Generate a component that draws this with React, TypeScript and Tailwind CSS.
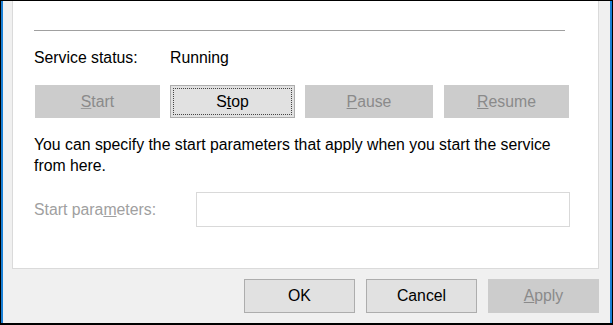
import React from "react";

const font = { fontFamily: '"Liberation Sans", Arial, sans-serif' };

function Btn({
  children,
  disabled,
  focused,
  className = "",
}: {
  children: React.ReactNode;
  disabled?: boolean;
  focused?: boolean;
  className?: string;
}) {
  return (
    <div
      className={
        "flex shrink-0 items-center justify-center text-[15.8px] leading-none border " +
        (disabled
          ? "bg-[#cccccc] border-[#cccccc] text-[#8a8a8a] "
          : "bg-[#e1e1e1] border-[#adadad] text-[#000000] ") +
        className
      }
    >
      {focused ? (
        <div className="m-[2px] flex h-[calc(100%-4px)] w-[calc(100%-4px)] items-center justify-center border border-dotted border-[#444]">
          {children}
        </div>
      ) : (
        children
      )}
    </div>
  );
}

export default function App() {
  return (
    <div
      className="w-[613px] h-[325px] bg-black pt-px pl-px pr-px pb-[2px]"
      style={font}
    >
      <div className="flex h-full w-full flex-col border-l-2 border-r-2 border-[#1a7fd4] bg-[#f0f0f0]">
        <div className="ml-[9px] mr-[11px] h-[268px] shrink-0 border-l border-r border-b border-[#dadada] bg-white">
          <div className="pl-[21px] pt-[29px]">
            <div className="h-px w-[531px] bg-[#a0a0a0]" />
            <div className="mt-[18px] flex h-[18px] items-center text-[15.8px] text-black">
              <span className="w-[136px]">Service status:</span>
              <span>Running</span>
            </div>
            <div className="mt-[18px] flex">
              <Btn disabled className="ml-px h-[33px] w-[125px]">
                <span><u className="decoration-[#9a9a9a]">S</u>tart</span>
              </Btn>
              <Btn focused className="ml-[10px] h-[33px] w-[125px]">
                <span>S<u>t</u>op</span>
              </Btn>
              <Btn disabled className="ml-[10px] h-[33px] w-[128px]">
                <span><u>P</u>ause</span>
              </Btn>
              <Btn disabled className="ml-[11px] h-[33px] w-[125px]">
                <span><u>R</u>esume</span>
              </Btn>
            </div>
            <p className="mt-[16px] text-[15.8px] leading-[21px] text-black">
              You can specify the start parameters that apply when you start the service
              <br />
              from here.
            </p>
            <div className="mt-[16px] flex items-center">
              <span className="w-[162px] text-[15.8px] text-[#a0a0a0]">
                Start para<u>m</u>eters:
              </span>
              <div className="h-[35px] w-[374px] border border-[#d9d9d9] bg-white" />
            </div>
          </div>
        </div>
        <div className="mt-[10px] flex justify-end gap-[11px] pr-[11px]">
          <Btn className="h-[34px] w-[111px]">OK</Btn>
          <Btn className="h-[34px] w-[111px]">Cancel</Btn>
          <Btn disabled className="h-[34px] w-[111px]">
            <span><u>A</u>pply</span>
          </Btn>
        </div>
      </div>
    </div>
  );
}
